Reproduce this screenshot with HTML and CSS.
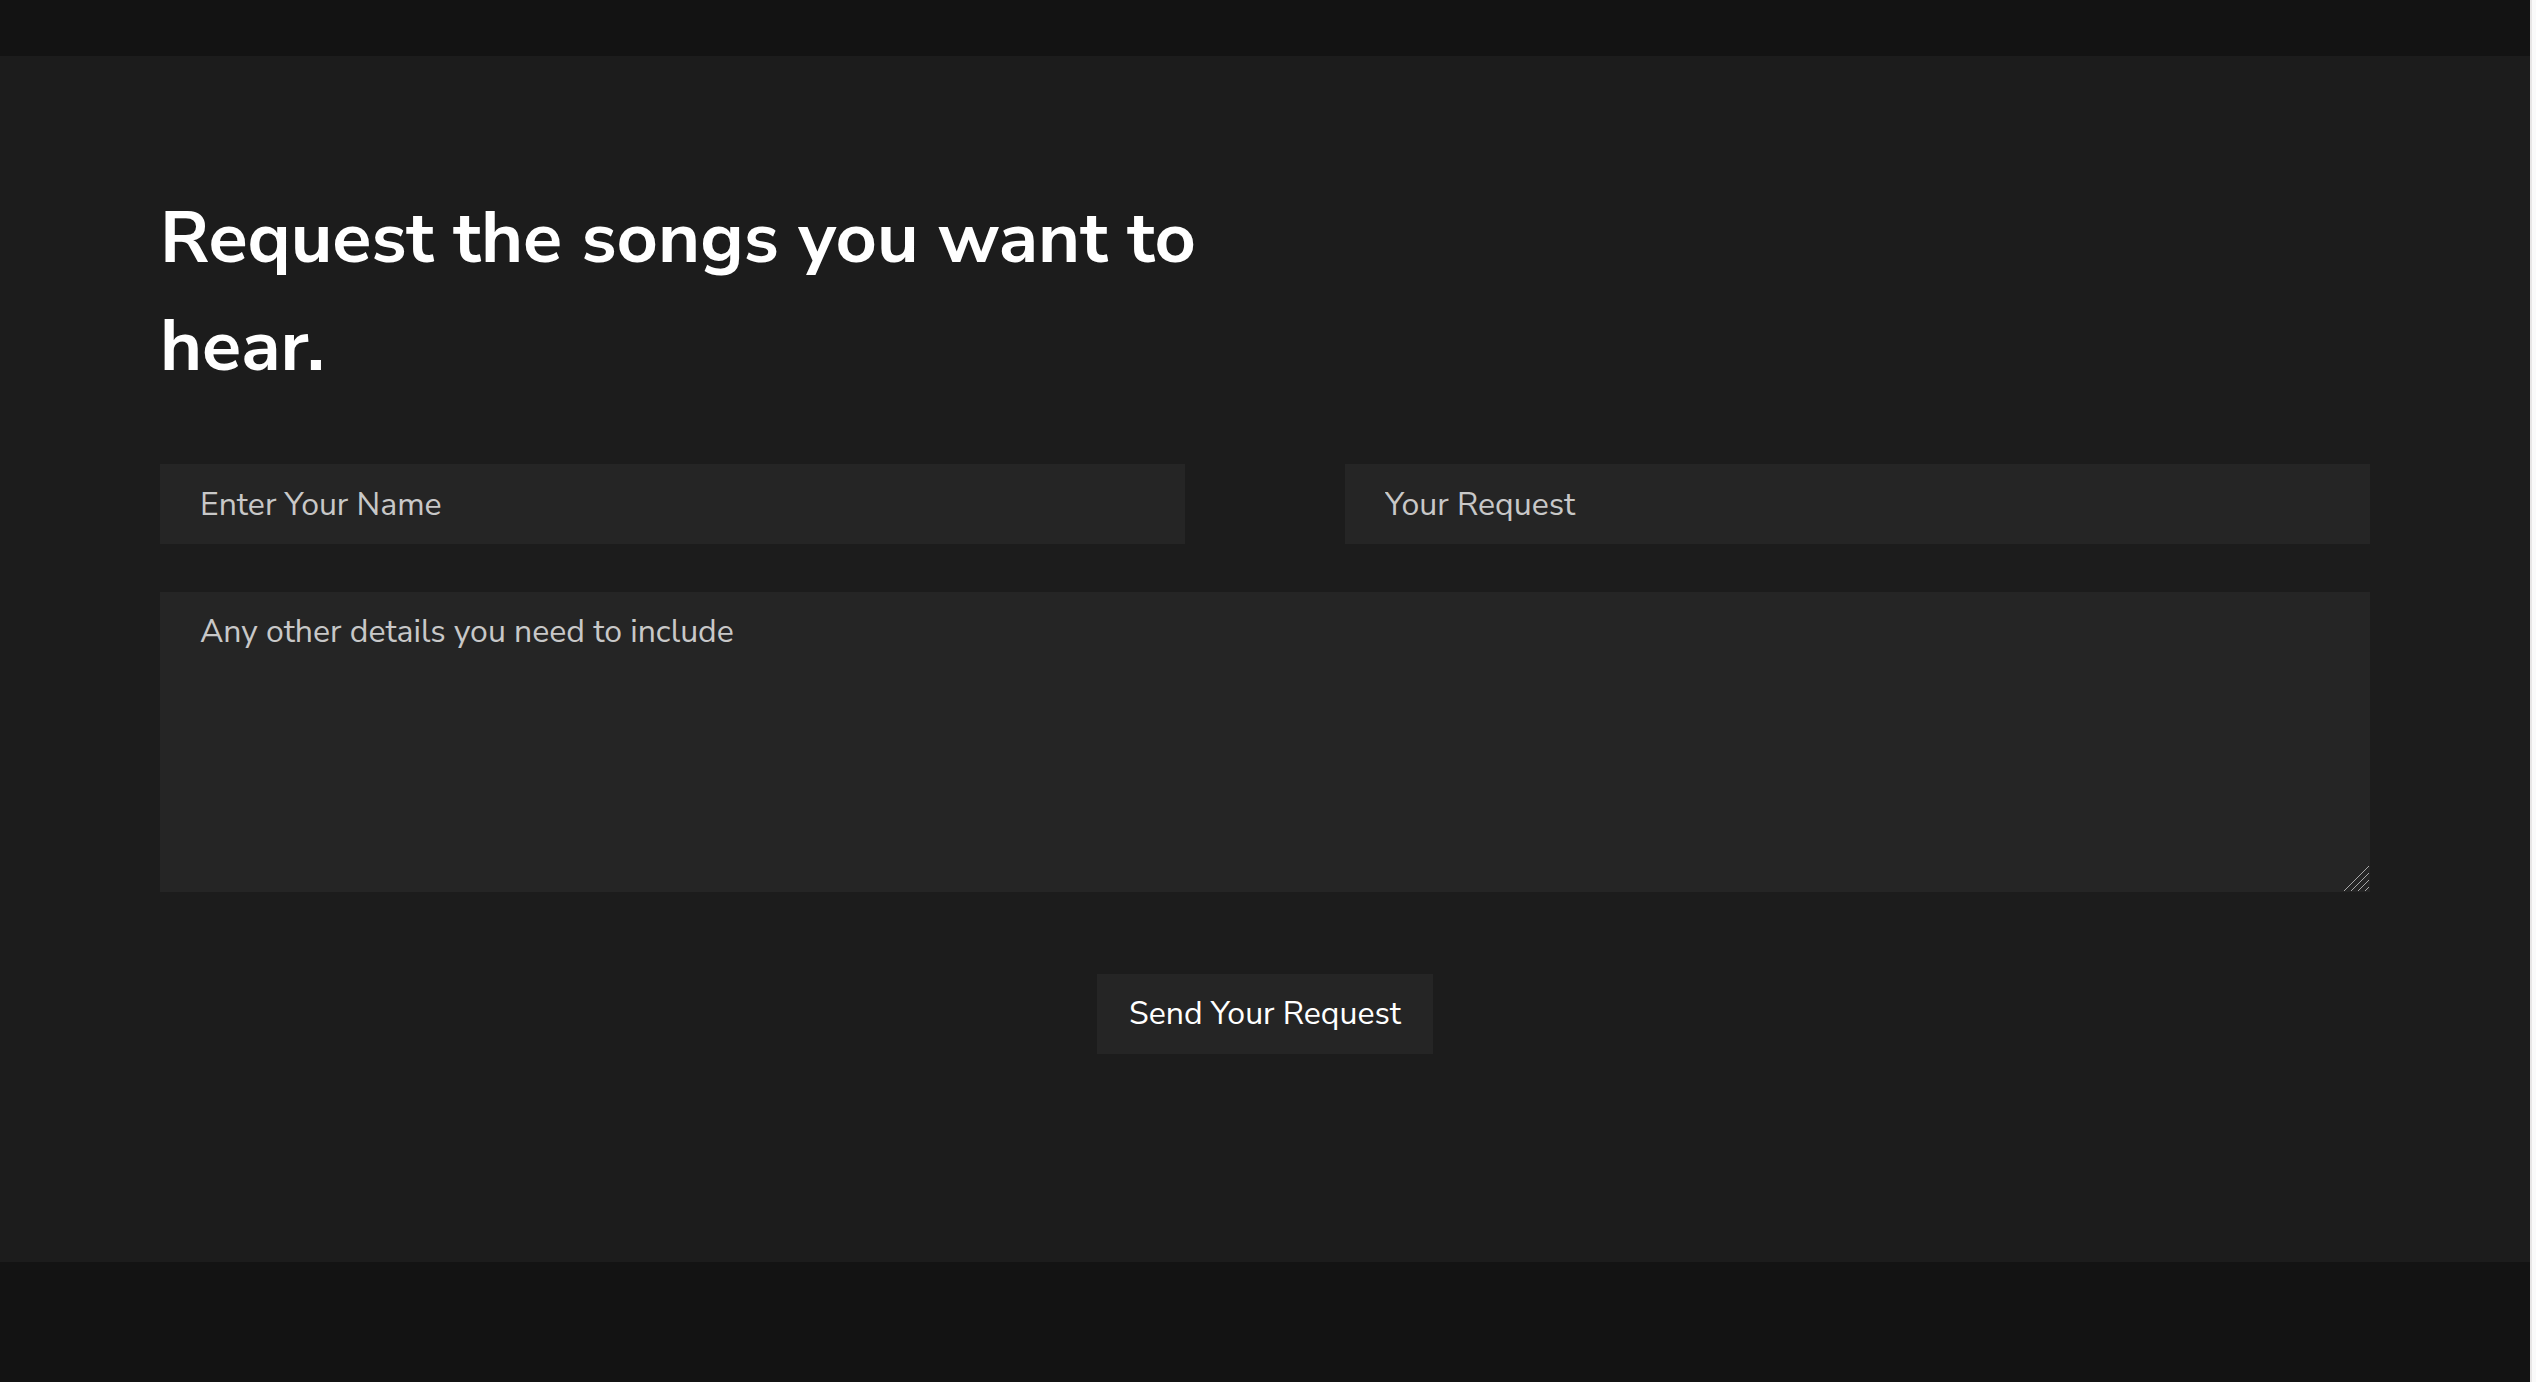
FILE: index.html
```html
<!DOCTYPE html>
<html lang="en">
<head>
<meta charset="utf-8">
<title>Song requests</title>
<link rel="stylesheet" href="styles.css">
</head>
<body>
<main class="request">
  <h1 class="request-title">Request the songs you want to hear.</h1>
  <form class="request-form">
    <input class="field" type="text" name="name" placeholder="Enter Your Name" aria-label="Enter Your Name">
    <input class="field" type="text" name="song" placeholder="Your Request" aria-label="Your Request">
    <div class="details">
      <textarea class="field field-large" name="details" placeholder="Any other details you need to include" aria-label="Any other details you need to include"></textarea>
      <svg class="grip" viewBox="0 0 26 26" aria-hidden="true"><path d="M0 25 25 0M7 25 25 7M14 25 25 14M21 25 25 21"/></svg>
    </div>
    <button class="send" type="submit">Send Your Request</button>
  </form>
</main>
</body>
</html>
```
FILE: styles.css
```css
* {
  box-sizing: border-box;
}

html {
  border-right: 4px solid #fafafa;
  background: #131313;
}

body {
  margin: 0;
  padding: 56px 0 120px;
  min-height: 100vh;
  background: #131313;
  border-right: 2px solid #e8e6e6;
  color: #fff;
  font-family: "Nunito Sans", Nunito, "Open Sans", sans-serif;
}

.request {
  padding: 128px 160px 208px;
  background: #1c1c1c;
}

.request-title {
  width: 50%;
  margin: 0 0 64px;
  font-size: 72px;
  line-height: 108px;
  font-weight: 700;
}

.request-form {
  display: grid;
  grid-template-columns: 1fr 1fr;
  column-gap: 160px;
  row-gap: 48px;
}

.field {
  display: block;
  width: 100%;
  height: 80px;
  padding: 0 40px;
  border: 0;
  border-radius: 0;
  background: #252525;
  color: #fff;
  font: 32px/48px "Nunito Sans", Nunito, Lato, sans-serif;
}

.field::placeholder {
  color: #c8c8c8;
  opacity: 1;
}

.details {
  position: relative;
  grid-column: 1 / -1;
}

.field-large {
  height: 300px;
  padding: 16px 40px;
  resize: none;
}

.grip {
  position: absolute;
  right: 0;
  bottom: 0;
  width: 26px;
  height: 26px;
  fill: none;
  stroke: #a8a8a8;
  stroke-width: 1;
}

.send {
  grid-column: 1 / -1;
  justify-self: center;
  height: 80px;
  margin-top: 34px;
  padding: 0 32px;
  border: 0;
  background: #252525;
  color: #fff;
  font: 32px/48px "Nunito Sans", Nunito, Lato, sans-serif;
}
```
